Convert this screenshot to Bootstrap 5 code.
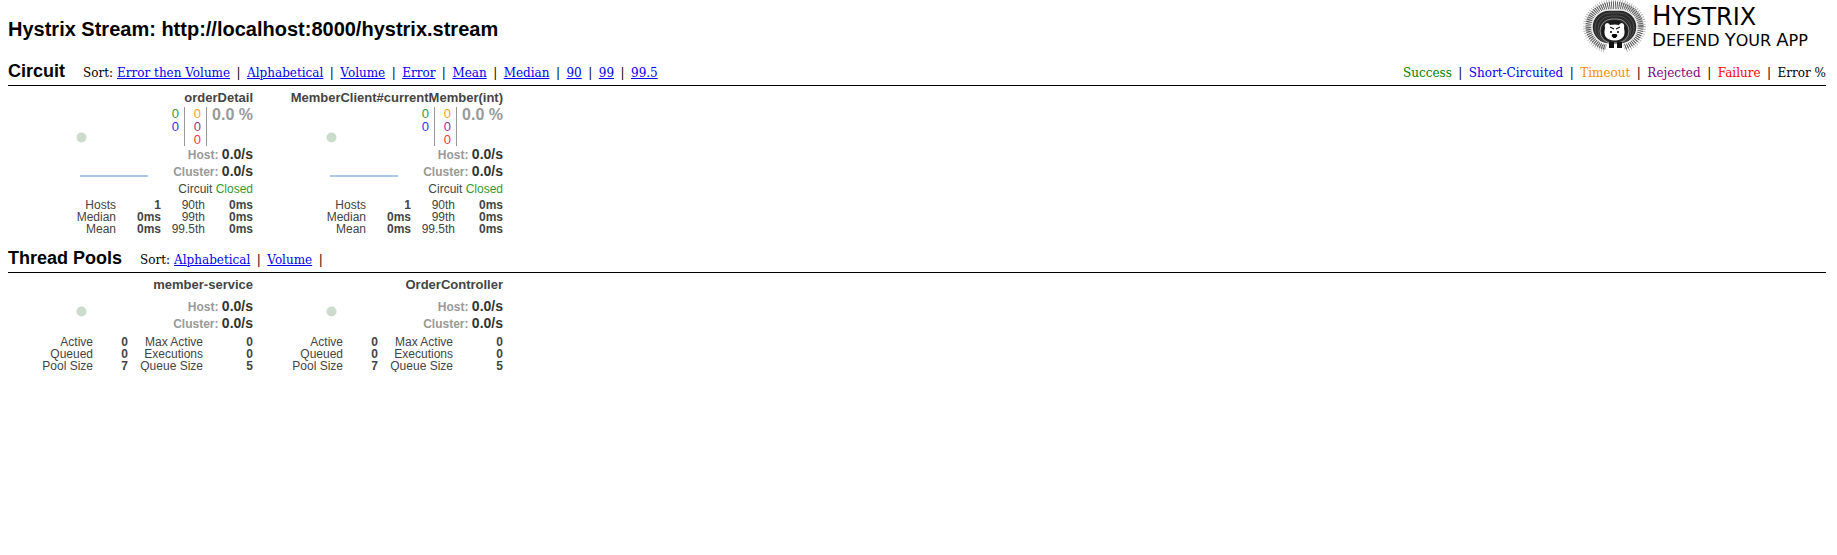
<!DOCTYPE html>
<html lang="en">
<head>
<meta charset="utf-8">
<meta name="viewport" content="width=device-width, initial-scale=1">
<title>Hystrix Dashboard</title>
<link href="https://cdn.jsdelivr.net/npm/bootstrap@5.3.0/dist/css/bootstrap.min.css" rel="stylesheet">
<style>
body { font-family: "Liberation Sans", Arial, sans-serif; font-size: 12px; line-height: 12px; color: #000; background: #fff; }
.page { padding: 0 11px 0 8px; }
.stream-title { font-size: 20px; line-height: 24px; font-weight: 700; padding-top: 17px; }
.page-head { min-height: 61px; }
.logo-words { width: 174px; font-family: "DejaVu Sans", sans-serif; white-space: nowrap; }
.logo-name { font-size: 24px; line-height: 26px; padding-top: 3px; height: 31px; }
.logo-name span { font-size: 26px; }
.logo-tag { font-size: 16px; line-height: 18px; }
.logo-tag span { font-size: 18px; }
.section-bar { border-bottom: 1px solid #000; height: 25px; column-gap: 18px; font-family: "DejaVu Serif", serif; line-height: 20px; }
.section-bar h2 { font-family: "Liberation Sans", Arial, sans-serif; font-size: 18px; line-height: 20px; font-weight: 700; }
.items { column-gap: 6px; }
.items i { width: 5px; text-align: center; font-style: normal; }
.items a { color: #00e; text-decoration: underline; }
.monitor { width: 250px; padding-right: 5px; color: #444; }
.monitor h3 { font-size: 13px; line-height: 18px; padding-top: 3px; font-weight: 700; white-space: nowrap; }
.chart { width: 245px; }
.chart svg { left: 0; top: 0; }
.counts { font-size: 13px; line-height: 13px; }
.counts > div { width: 22px; padding-right: 5px; border-right: 1px solid #999; height: 39px; }
.error-pct { font-size: 16px; line-height: 15px; font-weight: 700; color: #999; width: 46px; }
.rate { font-size: 12px; line-height: 17px; height: 17px; font-weight: 700; color: #999; }
.rate b { font-size: 14px; color: #333; }
.state { line-height: 19px; }
.c-green { color: #339933; } .c-blue { color: #3333ff; } .c-orange { color: #ff9f1a; } .c-purple { color: #993399; } .c-red { color: #ff3333; }
.stats { width: 245px; table-layout: fixed; }
.stats th { font-weight: 400; text-align: right; white-space: nowrap; padding: 0; }
.stats td { font-weight: 700; text-align: right; padding: 0; }
.circuit-cols col:nth-child(1) { width: 108px; } .circuit-cols col:nth-child(2) { width: 45px; } .circuit-cols col:nth-child(3) { width: 44px; }
.pool-cols col:nth-child(1) { width: 85px; } .pool-cols col:nth-child(2) { width: 35px; } .pool-cols col:nth-child(3) { width: 75px; }
.pools { margin-top: 13px; }
.l-success { color: green; } .l-short { color: blue; } .l-timeout { color: #ff8c00; } .l-rejected { color: purple; } .l-failure { color: red; }
</style>
<script src="https://cdn.jsdelivr.net/npm/bootstrap@5.3.0/dist/js/bootstrap.bundle.min.js"></script>
</head>
<body>
<div class="container-fluid page">
  <header class="page-head d-flex justify-content-between align-items-start">
    <h1 class="stream-title m-0">Hystrix Stream: http://localhost:8000/hystrix.stream</h1>
    <div class="d-flex">
      <svg width="72" height="55" viewBox="0 0 72 55" role="img" aria-label="Hystrix logo">
        <g fill="none">
          <ellipse cx="34.500" cy="26.500" rx="28" ry="24" stroke-width="7" stroke-dasharray=".6 1.6" stroke="#999"/>
          <ellipse cx="34.500" cy="26.500" rx="25" ry="21" stroke-width="8" stroke-dasharray=".9 1" stroke="#555"/>
        </g>
        <path d="M23 56L28 41H42L47 56Z" fill="#fff"/>
        <rect x="12" y="10" width="45" height="34" rx="17" fill="#2a2a2a" stroke="#eee" stroke-width="1.5"/>
        <g fill="none" stroke="#5a5a5a" stroke-width=".8">
          <rect x="15" y="13" width="39" height="30" rx="15"/>
          <rect x="18" y="16" width="33" height="27" rx="13"/>
          <rect x="20" y="19" width="29" height="24" rx="12" stroke="#aaa"/>
        </g>
        <ellipse cx="34.500" cy="31" rx="13" ry="10.500" fill="#1a1a1a"/>
        <path d="M25 28Q24 24 27 23Q29 23 30 25Q35 24 39 25Q40 23 42 23Q45 24 44 28Q46 36 41 39Q35 42 28 39Q23 36 25 28Z" fill="#fff"/>
        <path d="M30 27l4 2M40 27l-4 2" stroke="#111" stroke-width="1.100"/>
        <circle cx="31" cy="32" r="1"/><circle cx="38" cy="32" r="1"/>
        <path d="M32.500 34h4l1 2-2 2h-2l-2-2z"/>
        <path d="M29 42h5v6h-5zM37 42h5v6h-5z" fill="#111"/>
      </svg>
      <div class="logo-words">
        <div class="logo-name"><span>H</span>YSTRIX</div>
        <div class="logo-tag"><span>D</span>EFEND <span>Y</span>OUR <span>A</span>PP</div>
      </div>
    </div>
  </header>

  <section>
    <div class="section-bar d-flex align-items-baseline">
      <h2 class="m-0">Circuit</h2>
      <nav class="d-flex" aria-label="Sort circuits">
        <span class="me-1">Sort:</span>
        <div class="items d-flex"><a href="#">Error then Volume</a><i>|</i><a href="#">Alphabetical</a><i>|</i><a href="#">Volume</a><i>|</i><a href="#">Error</a><i>|</i><a href="#">Mean</a><i>|</i><a href="#">Median</a><i>|</i><a href="#">90</a><i>|</i><a href="#">99</a><i>|</i><a href="#">99.5</a></div>
      </nav>
      <div class="items d-flex ms-auto">
        <span class="l-success">Success</span><i>|</i><span class="l-short">Short-Circuited</span><i>|</i><span class="l-timeout">Timeout</span><i>|</i><span class="l-rejected">Rejected</span><i>|</i><span class="l-failure">Failure</span><i>|</i><span>Error %</span>
      </div>
    </div>
    <div class="d-flex flex-wrap">
      <article class="monitor">
        <h3 class="m-0 text-end">orderDetail</h3>
        <div class="chart position-relative">
          <svg class="position-absolute" width="150" height="92"><circle cx="73.500" cy="30.500" r="5" fill="#ccdccc"/><path d="M72 69h68" stroke="#a9c9e4" stroke-width="2"/></svg>
          <div class="counts d-flex justify-content-end text-end">
            <div><span class="c-green d-block">0</span><span class="c-blue d-block">0</span></div>
            <div><span class="c-orange d-block">0</span><span class="c-purple d-block">0</span><span class="c-red d-block">0</span></div>
            <span class="error-pct">0.0 %</span>
          </div>
          <div class="rate text-end">Host: <b>0.0/s</b></div>
          <div class="rate text-end">Cluster: <b>0.0/s</b></div>
          <div class="state text-end">Circuit <span class="c-green">Closed</span></div>
        </div>
        <table class="stats">
          <colgroup class="circuit-cols"><col><col><col><col></colgroup>
          <tr><th>Hosts</th><td>1</td><th>90th</th><td>0ms</td></tr>
          <tr><th>Median</th><td>0ms</td><th>99th</th><td>0ms</td></tr>
          <tr><th>Mean</th><td>0ms</td><th>99.5th</th><td>0ms</td></tr>
        </table>
      </article>
      <article class="monitor">
        <h3 class="m-0 text-end">MemberClient#currentMember(int)</h3>
        <div class="chart position-relative">
          <svg class="position-absolute" width="150" height="92"><circle cx="73.500" cy="30.500" r="5" fill="#ccdccc"/><path d="M72 69h68" stroke="#a9c9e4" stroke-width="2"/></svg>
          <div class="counts d-flex justify-content-end text-end">
            <div><span class="c-green d-block">0</span><span class="c-blue d-block">0</span></div>
            <div><span class="c-orange d-block">0</span><span class="c-purple d-block">0</span><span class="c-red d-block">0</span></div>
            <span class="error-pct">0.0 %</span>
          </div>
          <div class="rate text-end">Host: <b>0.0/s</b></div>
          <div class="rate text-end">Cluster: <b>0.0/s</b></div>
          <div class="state text-end">Circuit <span class="c-green">Closed</span></div>
        </div>
        <table class="stats">
          <colgroup class="circuit-cols"><col><col><col><col></colgroup>
          <tr><th>Hosts</th><td>1</td><th>90th</th><td>0ms</td></tr>
          <tr><th>Median</th><td>0ms</td><th>99th</th><td>0ms</td></tr>
          <tr><th>Mean</th><td>0ms</td><th>99.5th</th><td>0ms</td></tr>
        </table>
      </article>
    </div>
  </section>

  <section class="pools">
    <div class="section-bar d-flex align-items-baseline">
      <h2 class="m-0">Thread Pools</h2>
      <nav class="d-flex" aria-label="Sort thread pools">
        <span class="me-1">Sort:</span>
        <div class="items d-flex"><a href="#">Alphabetical</a><i>|</i><a href="#">Volume</a><i>|</i></div>
      </nav>
    </div>
    <div class="d-flex flex-wrap">
      <article class="monitor">
        <h3 class="m-0 text-end">member-service</h3>
        <div class="chart position-relative py-1">
          <svg class="position-absolute" width="150" height="42"><circle cx="73.500" cy="17.500" r="5" fill="#ccdccc"/></svg>
          <div class="rate text-end">Host: <b>0.0/s</b></div>
          <div class="rate text-end">Cluster: <b>0.0/s</b></div>
        </div>
        <table class="stats">
          <colgroup class="pool-cols"><col><col><col><col></colgroup>
          <tr><th>Active</th><td>0</td><th>Max Active</th><td>0</td></tr>
          <tr><th>Queued</th><td>0</td><th>Executions</th><td>0</td></tr>
          <tr><th>Pool Size</th><td>7</td><th>Queue Size</th><td>5</td></tr>
        </table>
      </article>
      <article class="monitor">
        <h3 class="m-0 text-end">OrderController</h3>
        <div class="chart position-relative py-1">
          <svg class="position-absolute" width="150" height="42"><circle cx="73.500" cy="17.500" r="5" fill="#ccdccc"/></svg>
          <div class="rate text-end">Host: <b>0.0/s</b></div>
          <div class="rate text-end">Cluster: <b>0.0/s</b></div>
        </div>
        <table class="stats">
          <colgroup class="pool-cols"><col><col><col><col></colgroup>
          <tr><th>Active</th><td>0</td><th>Max Active</th><td>0</td></tr>
          <tr><th>Queued</th><td>0</td><th>Executions</th><td>0</td></tr>
          <tr><th>Pool Size</th><td>7</td><th>Queue Size</th><td>5</td></tr>
        </table>
      </article>
    </div>
  </section>
</div>
</body>
</html>
